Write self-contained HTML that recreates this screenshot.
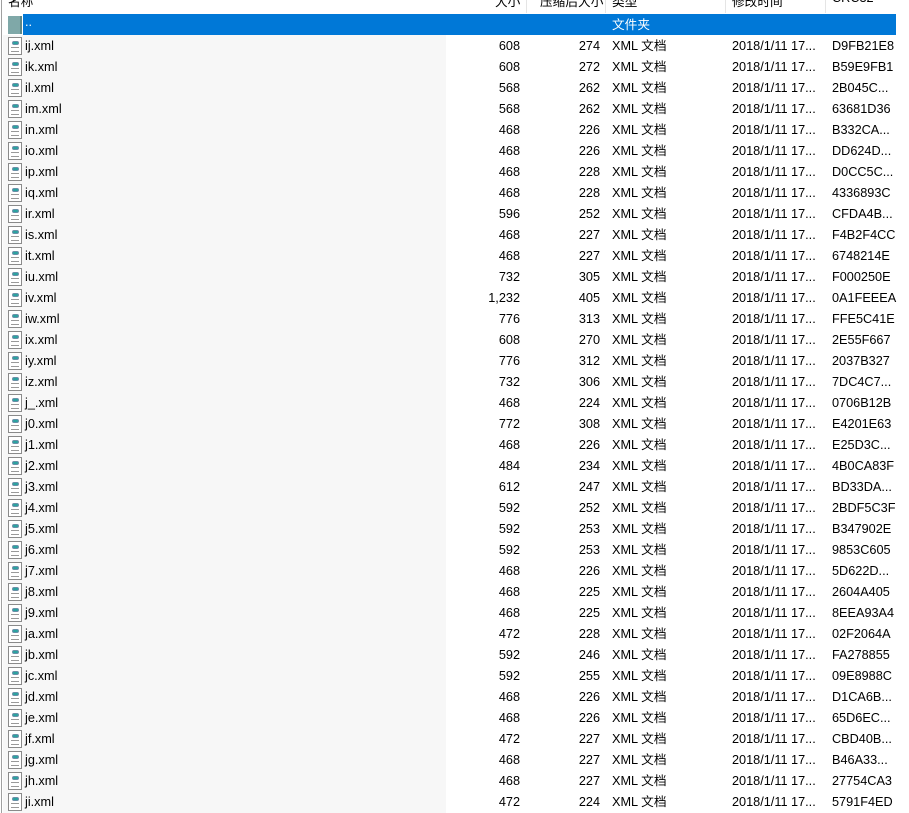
<!DOCTYPE html>
<html><head><meta charset="utf-8"><style>
*{margin:0;padding:0;box-sizing:border-box}
body{width:909px;height:813px;overflow:hidden;background:#fff;font-family:"Liberation Sans","Noto Sans CJK SC",sans-serif;font-size:12.7px;color:#000;position:relative}
.namebg{position:absolute;left:3px;top:35px;width:443px;height:778px;background:#f7f7f7}
.lb{position:absolute;left:1px;top:0;width:1px;height:813px;background:#a0a0a0}
.hdr{position:absolute;top:-9px;color:#000;white-space:nowrap}
.sep{position:absolute;top:0;width:1px;height:13px;background:#e5e5e5}
.sel{position:absolute;left:23px;top:14px;width:873px;height:21px;background:#0078d7}
.row{position:absolute;left:0;height:21px;width:900px;line-height:22px;white-space:nowrap}
.row span{position:absolute;top:0}
.n{left:25px}.s{right:380px}.c{right:300px}.t{left:612px}.d{left:732px}.r{left:832px}
.ic{position:absolute;left:8px;top:2px;width:14px;height:18px;border:1px solid #8a8a8a;background:#fff}
.ic i{position:absolute;left:3px;top:3px;width:7px;height:4px;border-radius:2px;background:#2aa3a0;border:1px solid #6a8fa8}
.ic b{position:absolute;left:2px;top:9px;width:8px;height:5px;border-top:1px solid #999;border-bottom:1px solid #999}
.fold{position:absolute;left:8px;top:16px;width:14px;height:18px;background:#7fa8a8;border-right:2px solid #5f8888}
</style></head><body>
<div class="namebg"></div>
<div class="lb"></div>
<span class="hdr" style="left:8px">名称</span>
<span class="hdr" style="left:495px">大小</span>
<span class="hdr" style="left:540px">压缩后大小</span>
<span class="hdr" style="left:612px">类型</span>
<span class="hdr" style="left:732px">修改时间</span>
<span class="hdr" style="left:832px">CRC32</span>
<div class="sep" style="left:526px"></div><div class="sep" style="left:605px"></div><div class="sep" style="left:725px"></div><div class="sep" style="left:825px"></div>
<div class="sel"></div><div class="fold"></div>
<div class="row" style="top:14px;color:#fff"><span class="n" style="top:-3px">..</span><span class="t">文件夹</span></div>
<div id="rows"></div>
<script>
const d=[["ij",608,274,"D9FB21E8"],["ik",608,272,"B59E9FB1"],["il",568,262,"2B045C..."],["im",568,262,"63681D36"],["in",468,226,"B332CA..."],["io",468,226,"DD624D..."],["ip",468,228,"D0CC5C..."],["iq",468,228,"4336893C"],["ir",596,252,"CFDA4B..."],["is",468,227,"F4B2F4CC"],["it",468,227,"6748214E"],["iu",732,305,"F000250E"],["iv","1,232",405,"0A1FEEEA"],["iw",776,313,"FFE5C41E"],["ix",608,270,"2E55F667"],["iy",776,312,"2037B327"],["iz",732,306,"7DC4C7..."],["j_",468,224,"0706B12B"],["j0",772,308,"E4201E63"],["j1",468,226,"E25D3C..."],["j2",484,234,"4B0CA83F"],["j3",612,247,"BD33DA..."],["j4",592,252,"2BDF5C3F"],["j5",592,253,"B347902E"],["j6",592,253,"9853C605"],["j7",468,226,"5D622D..."],["j8",468,225,"2604A405"],["j9",468,225,"8EEA93A4"],["ja",472,228,"02F2064A"],["jb",592,246,"FA278855"],["jc",592,255,"09E8988C"],["jd",468,226,"D1CA6B..."],["je",468,226,"65D6EC..."],["jf",472,227,"CBD40B..."],["jg",468,227,"B46A33..."],["jh",468,227,"27754CA3"],["ji",472,224,"5791F4ED"]];
let h="";d.forEach((r,i)=>{h+=`<div class="row" style="top:${35+i*21}px"><div class="ic"><i></i><b></b></div><span class="n">${r[0]}.xml</span><span class="s">${r[1]}</span><span class="c">${r[2]}</span><span class="t">XML 文档</span><span class="d">2018/1/11 17...</span><span class="r">${r[3]}</span></div>`});
document.getElementById("rows").innerHTML=h;
</script>
</body></html>
